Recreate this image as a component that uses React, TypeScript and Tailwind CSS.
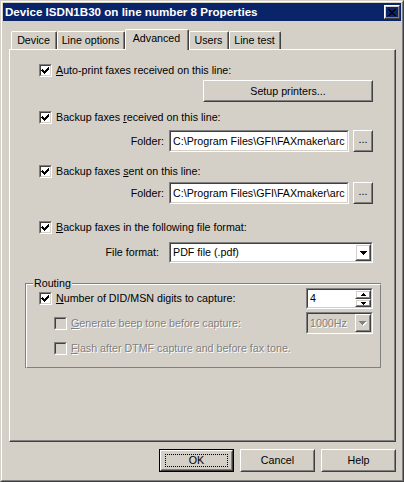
import React from "react";

// classic win2k 3d borders
const raisedOuter = "border border-t-white border-l-white border-r-[#404040] border-b-[#404040]";
const raisedInner = "border border-t-[#d4d0c8] border-l-[#d4d0c8] border-r-[#808080] border-b-[#808080]";
const sunkenOuter = "border border-t-[#808080] border-l-[#808080] border-r-white border-b-white";
const sunkenInner = "border border-t-[#404040] border-l-[#404040] border-r-[#d4d0c8] border-b-[#d4d0c8]";
const disabledText = "text-[#808080] [text-shadow:1px_1px_0_#ffffff]";

function Raised({ className, children }: { className: string; children?: React.ReactNode }) {
  return (
    <div className={`${raisedOuter} ${className} shrink-0`}>
      <div className={`${raisedInner} w-full h-full flex items-center justify-center`}>{children}</div>
    </div>
  );
}

function Sunken({ className, inner, children }: { className: string; inner: string; children?: React.ReactNode }) {
  return (
    <div className={`${sunkenOuter} ${className} shrink-0`}>
      <div className={`${sunkenInner} ${inner} w-full h-full flex`}>{children}</div>
    </div>
  );
}

function DownArrow({ color = "#000000" }: { color?: string }) {
  return (
    <svg width="7" height="4" viewBox="0 0 7 4" shapeRendering="crispEdges" className="block">
      <path d="M0 0h7v1h-1v1h-1v1h-1v1h-1v-1h-1v-1h-1v-1h-1z" fill={color} />
    </svg>
  );
}

function Check({ checked, disabled }: { checked?: boolean; disabled?: boolean }) {
  return (
    <div className={`w-[13px] h-[13px] shrink-0 ${sunkenOuter}`}>
      <div className={`w-full h-full ${sunkenInner} ${disabled ? "bg-[#d4d0c8]" : "bg-white"}`}>
        {checked && (
          <svg width="9" height="9" viewBox="0 0 9 9" shapeRendering="crispEdges" className="block">
            <path
              d="M1 3h1v1h1v1h1v-1h1v-1h1v-1h1v-1h1v3h-1v1h-1v1h-1v1h-1v1h-1v-1h-1v-1h-1v-1h-1z"
              fill="#000000"
            />
          </svg>
        )}
      </div>
    </div>
  );
}

function CheckRow({ className, checked, disabled, children }: { className: string; checked?: boolean; disabled?: boolean; children: React.ReactNode }) {
  return (
    <div className={`flex items-center gap-[4px] ${className}`}>
      <Check checked={checked} disabled={disabled} />
      <span className={`whitespace-nowrap ${disabled ? disabledText : ""}`}>{children}</span>
    </div>
  );
}

function FolderRow({ className }: { className: string }) {
  return (
    <div className={`flex items-center justify-end ${className}`}>
      <span className="mr-[5px]">Folder:</span>
      <Sunken className="w-[180px] h-[22px]" inner="bg-white items-center overflow-hidden">
        <span className="pl-[2px] whitespace-nowrap">{"C:\\Program Files\\GFI\\FAXmaker\\arc"}</span>
      </Sunken>
      <Raised className="ml-[4px] w-[20px] h-[22px]">
        <span className="pb-[3px]">...</span>
      </Raised>
    </div>
  );
}

function Tab({ className, active, children }: { className: string; active?: boolean; children: React.ReactNode }) {
  return (
    <div
      className={`${className} shrink-0 border-t border-l border-white border-r border-r-[#404040] rounded-tl-[2px] rounded-tr-[2px] bg-[#d4d0c8] ${
        active ? "h-[21px] -mb-px relative z-10" : "h-[18px]"
      }`}
    >
      <div className={`h-full border-r border-[#808080] flex items-center justify-center ${active ? "pb-[3px]" : "pb-px"}`}>
        {children}
      </div>
    </div>
  );
}

export default function App() {
  return (
    <div className="w-[404px] h-[482px] bg-[#d4d0c8] font-['Liberation_Sans',Arial,sans-serif] text-[10.7px] leading-none text-black select-none">
      <div className="h-full border border-t-[#d4d0c8] border-l-[#d4d0c8] border-r-[#404040] border-b-[#404040]">
        <div className="h-full border border-t-white border-l-white border-r-[#808080] border-b-[#808080] p-px flex flex-col">
          {/* title bar */}
          <div className="h-[18px] shrink-0 bg-[#0a246a] flex items-center justify-between pl-[2px] pr-px">
            <span className="text-white font-bold text-[11.6px] whitespace-nowrap">Device ISDN1B30 on line number 8 Properties</span>
            <Raised className="w-[16px] h-[14px]">
              <svg width="8" height="7" viewBox="0 0 8 7" shapeRendering="crispEdges" className="block">
                <path d="M0 0h2v1h1v1h2v-1h1v-1h2v1h-1v1h-1v1h-1v1h1v1h1v1h1v1h-2v-1h-1v-1h-2v1h-1v1h-2v-1h1v-1h1v-1h1v-1h-1v-1h-1v-1h-1z" fill="#000000" />
              </svg>
            </Raised>
          </div>

          {/* tabs */}
          <div className="mt-[8px] h-[20px] shrink-0 flex items-end pl-[8px]">
            <Tab className="w-[46px]">Device</Tab>
            <Tab className="w-[68px]">Line options</Tab>
            <Tab className="w-[64px]" active>Advanced</Tab>
            <Tab className="w-[40px]">Users</Tab>
            <Tab className="w-[52px]">Line test</Tab>
          </div>

          {/* tab page */}
          <div className="ml-[6px] w-[387px] h-[393px] shrink-0 border-t border-l border-white border-r border-b border-r-[#404040] border-b-[#404040]">
            <div className="h-full border-r border-b border-[#808080] flex flex-col">
              <div className="flex flex-col pl-[29px] pr-[21px]">
                <CheckRow className="mt-[14px]" checked>
                  <u>A</u>uto-print faxes received on this line:
                </CheckRow>
                <div className="mt-[3px] flex justify-end">
                  <Raised className="w-[170px] h-[22px]">Setup printers...</Raised>
                </div>
                <CheckRow className="mt-[9px]" checked>
                  Backup faxes <u>r</u>eceived on this line:
                </CheckRow>
                <FolderRow className="mt-[6px]" />
                <CheckRow className="mt-[13px]" checked>
                  Backup faxes <u>s</u>ent on this line:
                </CheckRow>
                <FolderRow className="mt-[4px]" />
                <CheckRow className="mt-[17px]" checked>
                  <u>B</u>ackup faxes in the following file format:
                </CheckRow>
                <div className="mt-[8px] flex items-center justify-end">
                  <span className="mr-[10px]">File format:</span>
                  <Sunken className="w-[204px] h-[21px]" inner="bg-white items-center">
                    <span className="flex-1 pl-[2px]">PDF file (.pdf)</span>
                    <Raised className="w-[16px] h-[17px]">
                      <DownArrow />
                    </Raised>
                  </Sunken>
                </div>
              </div>

              {/* routing group */}
              <div className="relative mt-[20px] ml-[15px] w-[356px] h-[85px] border-t border-l border-[#808080] border-r-white border-b-white">
                <span className="absolute -top-[6px] left-[7px] bg-[#d4d0c8] px-px">Routing</span>
                <div className="h-full border-t border-l border-white border-r border-b border-r-[#808080] border-b-[#808080] flex flex-col pr-[7px]">
                  <div className="mt-[3px] h-[21px] flex items-center justify-between pl-[12px]">
                    <CheckRow className="" checked>
                      <u>N</u>umber of DID/MSN digits to capture:
                    </CheckRow>
                    <Sunken className="w-[67px] h-[21px]" inner="bg-white">
                      <span className="flex-1 pl-[2px] pt-[3px]">4</span>
                      <div className="w-[16px] flex flex-col">
                        <Raised className="w-[16px] h-[9px]">
                          <svg width="5" height="3" viewBox="0 0 5 3" shapeRendering="crispEdges" className="block">
                            <path d="M2 0h1v1h1v1h1v1h-5v-1h1v-1h1z" fill="#000000" />
                          </svg>
                        </Raised>
                        <Raised className="w-[16px] h-[8px]">
                          <svg width="5" height="3" viewBox="0 0 5 3" shapeRendering="crispEdges" className="block">
                            <path d="M0 0h5v1h-1v1h-1v1h-1v-1h-1v-1h-1z" fill="#000000" />
                          </svg>
                        </Raised>
                      </div>
                    </Sunken>
                  </div>
                  <div className="mt-[3px] h-[22px] flex items-center justify-between pl-[27px]">
                    <CheckRow className="" disabled>
                      <u>G</u>enerate beep tone before capture:
                    </CheckRow>
                    <Sunken className="w-[67px] h-[22px]" inner="bg-[#d4d0c8] items-center">
                      <span className={`flex-1 pl-[2px] ${disabledText}`}>1000Hz</span>
                      <Raised className="w-[16px] h-[18px]">
                        <svg width="8" height="5" viewBox="0 0 8 5" shapeRendering="crispEdges" className="block">
                          <path d="M1 1h7v1h-1v1h-1v1h-1v1h-1v-1h-1v-1h-1v-1h-1z" fill="#ffffff" />
                          <path d="M0 0h7v1h-1v1h-1v1h-1v1h-1v-1h-1v-1h-1v-1h-1z" fill="#808080" />
                        </svg>
                      </Raised>
                    </Sunken>
                  </div>
                  <CheckRow className="mt-[8px] pl-[27px]" disabled>
                    <u>F</u>lash after DTMF capture and before fax tone.
                  </CheckRow>
                </div>
              </div>
            </div>
          </div>

          {/* dialog buttons */}
          <div className="mt-[7px] flex justify-end gap-[6px] pr-[5px]">
            <div className="w-[75px] h-[23px] border border-black">
              <Raised className="w-full h-full">
                <div className="w-[63px] h-[13px] border border-dotted border-black flex items-center justify-center">OK</div>
              </Raised>
            </div>
            <Raised className="w-[75px] h-[23px]">Cancel</Raised>
            <Raised className="w-[75px] h-[23px]">Help</Raised>
          </div>
        </div>
      </div>
    </div>
  );
}
